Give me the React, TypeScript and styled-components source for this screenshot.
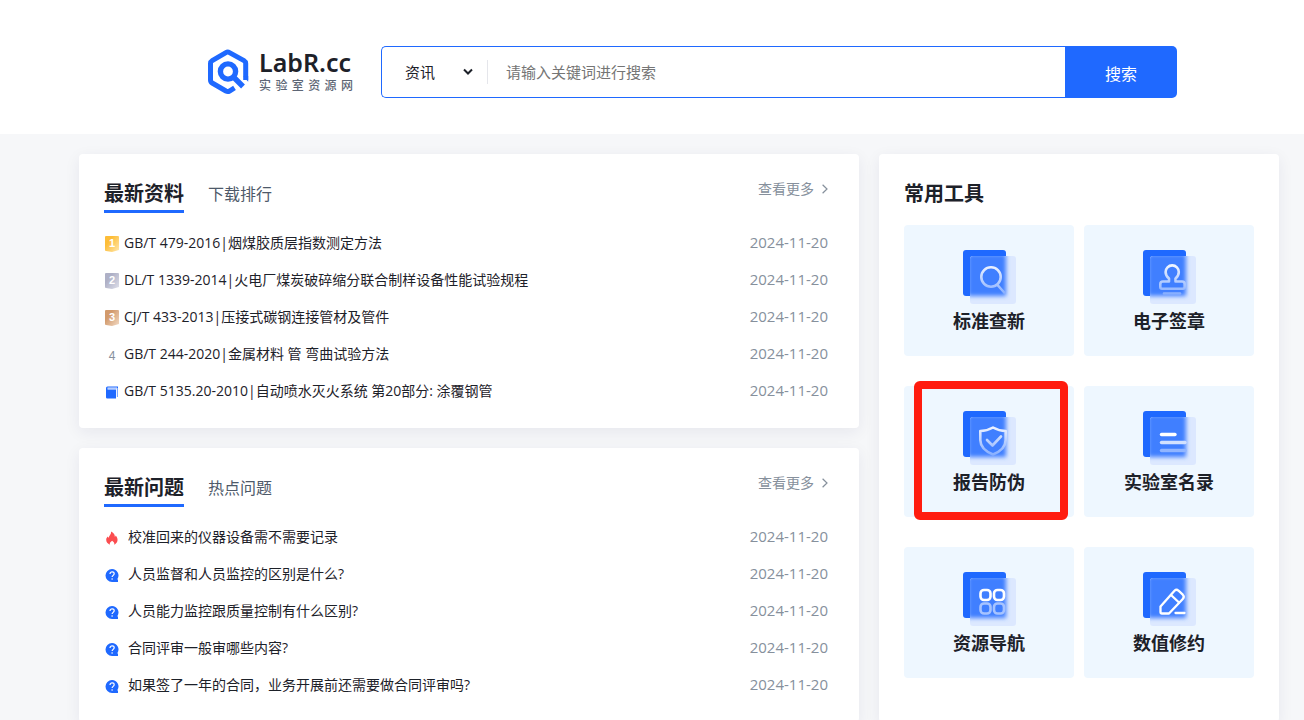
import React from "react";
import styled, { createGlobalStyle, css } from "styled-components";

const GlobalStyle = createGlobalStyle`
  *, *::before, *::after { box-sizing: border-box; }
  body {
    margin: 0;
    background: #f6f7f9;
    color: #1d2129;
    font-family: "Open Sans", "Noto Sans CJK SC", sans-serif;
    font-size: 14px;
  }
  button, input, select { font-family: inherit; }
  a { color: inherit; text-decoration: none; }
  h2, ul, ol { margin: 0; padding: 0; }
  ul, ol { list-style: none; }
  svg { display: block; }
`;

const Header = styled.header`
  display: flex;
  align-items: center;
  gap: 28px;
  padding: 46px 127px 36px 207px;
  background: #fff;
`;

const Brand = styled.a`
  display: flex;
  align-items: center;
  gap: 10px;
`;

const BrandText = styled.span`
  display: flex;
  flex-direction: column;
  gap: 2px;
  width: 94px;
  padding-bottom: 2px;
`;

const BrandName = styled.span`
  font-family: "Noto Sans", sans-serif;
  font-size: 25px;
  font-weight: 600;
  line-height: 28px;
  white-space: nowrap;
`;

const BrandTagline = styled.span`
  font-size: 12px;
  font-weight: 500;
  line-height: 16px;
  color: #5d6675;
  text-align-last: justify;
`;

const SearchForm = styled.form`
  display: flex;
  flex: 1;
  height: 52px;
`;

const SearchField = styled.div`
  display: flex;
  flex: 1;
  align-items: center;
  border: 1px solid #1f69ff;
  border-right: 0;
  border-radius: 5px 0 0 5px;
  background: #fff;
`;

const SelectWrap = styled.div`
  display: flex;
  align-items: center;
  width: 106px;
  height: 24px;
  padding-right: 13px;
  border-right: 1px solid #e5e6eb;
`;

const CategorySelect = styled.select`
  appearance: none;
  flex: 1;
  min-width: 0;
  margin-right: -12px;
  padding: 0 0 0 23px;
  border: 0;
  background: transparent;
  color: #1d2129;
  font-size: 15px;
  line-height: 24px;
`;

const SearchInput = styled.input`
  flex: 1;
  min-width: 0;
  height: 100%;
  padding: 0 18px;
  border: 0;
  outline: 0;
  background: transparent;
  font-size: 15px;
  &::placeholder { color: #757575; }
`;

const SearchButton = styled.button`
  width: 112px;
  padding: 2px 0 0;
  border: 0;
  border-radius: 0 5px 5px 0;
  background: #1f69ff;
  color: #fff;
  font-size: 16px;
`;

const Main = styled.main`
  display: grid;
  grid-template-columns: minmax(0, 1fr) 400px;
  gap: 20px;
  padding: 20px 25px 20px 79px;
`;

const Column = styled.div`
  display: flex;
  flex-direction: column;
  gap: 20px;
`;

const Card = styled.section`
  padding: 24px 25px 19px;
  border-radius: 4px;
  background: #fff;
  box-shadow: 0 4px 16px rgba(29, 33, 80, 0.07);
`;

const ListHead = styled.div`
  display: flex;
  align-items: flex-start;
  height: 46px;
`;

const Tab = styled.button<{ $active?: boolean }>`
  height: 35px;
  margin-right: 24px;
  padding: 0;
  border: 0;
  border-bottom: 3px solid transparent;
  background: none;
  color: #4e5969;
  font-size: 16px;
  line-height: 32px;
  ${(p) =>
    p.$active &&
    css`
      border-bottom-color: #1f69ff;
      color: #1d2129;
      font-size: 20px;
      font-weight: 700;
      line-height: 28px;
    `}
`;

const MoreLink = styled.a`
  display: flex;
  align-items: center;
  gap: 8px;
  margin: 0 6px 0 auto;
  color: #86909c;
  line-height: 22px;
`;

const Row = styled.li<{ $gap: number }>`
  display: flex;
  align-items: center;
  gap: ${(p) => p.$gap}px;
  height: 37px;
  padding: 0 6px 0 1px;
  & > svg { flex: none; margin-top: 2px; }
`;

const RowTitle = styled.a`
  flex: 1;
  min-width: 0;
  overflow: hidden;
  white-space: nowrap;
  text-overflow: ellipsis;
  line-height: 22px;
`;

const RowDate = styled.time`
  padding-bottom: 2px;
  color: #86909c;
  font-size: 15px;
  line-height: 22px;
`;

const ToolsTitle = styled.h2`
  height: 47px;
  font-size: 20px;
  line-height: 32px;
`;

const ToolGrid = styled.div`
  display: grid;
  grid-template-columns: 1fr 1fr;
  gap: 30px 10px;
`;

const Tool = styled.a`
  position: relative;
  display: flex;
  flex-direction: column;
  align-items: center;
  height: 131px;
  padding-top: 25px;
  border-radius: 4px;
  background: #eef7ff;
  font-size: 18px;
  font-weight: 700;
  line-height: 26px;
`;

const ToolLabel = styled.span`
  margin-top: 4px;
`;

const Highlight = styled.span`
  position: absolute;
  inset: -5px 6px -3px 10px;
  border: 8px solid #ff1c0f;
  border-radius: 6px;
`;

function LogoMark() {
  return (
    <svg width="42" height="46" viewBox="0 0 42 46" fill="none" stroke="#1f69ff" aria-hidden="true">
      <path d="M27.5 38.8 22.5 42q-1.7 1-3.6 0L5.2 34Q3.500 33 3.500 31V14.500Q3.500 12.600 5.200 11.600L18.900 3.600q1.800-1 3.600 0L37 11.600Q38.700 12.600 38.700 14.500V31" strokeWidth="5" />
      <path d="M36.200 27.500 41.200 32.800V27Z" fill="#1f69ff" stroke="none" />
      <circle cx="21" cy="22.500" r="7.600" strokeWidth="5.400" />
      <path d="M26 27.500 36 37.500" strokeWidth="5.400" />
    </svg>
  );
}

function Chevron() {
  return (
    <svg width="12" height="8" viewBox="0 0 12 8" fill="none" stroke="#1d2129" strokeWidth="2" pointerEvents="none" aria-hidden="true">
      <path d="m2 1.500 4 4 4-4" />
    </svg>
  );
}

function MoreArrow() {
  return (
    <svg width="6" height="10" viewBox="0 0 6 10" fill="none" stroke="#86909c" strokeWidth="1.200" aria-hidden="true">
      <path d="m.6.8 4.400 4.200L.6 9.200" />
    </svg>
  );
}

const medalColors: Record<number, [string, string]> = {
  1: ["#fdbd38", "#ffe5a6"],
  2: ["#aeb0c6", "#dcdde8"],
  3: ["#d29a6c", "#f0d6bf"],
};

function Medal({ rank }: { rank: number }) {
  const [from, to] = medalColors[rank];
  return (
    <svg width="14" height="16" viewBox="0 0 14 16" aria-hidden="true">
      <defs>
        <linearGradient id={`medal${rank}`} x1="0.300" y1="0.300" x2="1" y2="0.900">
          <stop offset="0" stopColor={from} />
          <stop offset="1" stopColor={to} />
        </linearGradient>
      </defs>
      <path d="M1 0h12q1 0 1 1v13l-7 2-6-1q-1 0-1-1V1q0-1 1-1Z" fill={`url(#medal${rank})`} />
      <text x="7" y="11" textAnchor="middle" fontFamily="Liberation Sans, sans-serif" fontSize="11" fontWeight="700" fill="#fff">{rank}</text>
    </svg>
  );
}

function PlainRank({ rank }: { rank: number }) {
  return (
    <svg width="14" height="16" viewBox="0 0 14 16" aria-hidden="true">
      <text x="7" y="13" textAnchor="middle" fontFamily="Liberation Sans, sans-serif" fontSize="12" fill="#86909c">{rank}</text>
    </svg>
  );
}

function BookIcon() {
  return (
    <svg width="14" height="16" viewBox="0 0 14 16" aria-hidden="true">
      <path d="M1 4q0-1.500 1.500-1.500H13V13h-1V4.500H2.500V5.500H11V14.500H2.200Q1 14.500 1 13.300Z" fill="#1f69ff" />
      <path d="M2.500 4H12v9" fill="none" stroke="#dbe7ff" strokeWidth="1" />
    </svg>
  );
}

function FireIcon() {
  return (
    <svg width="14" height="16" viewBox="0 0 14 16" aria-hidden="true">
      <path d="M6.200 1.500c2.800 1.400 3.700 3.400 3.600 5.200.6-.2.900-.6 1-1.200 1.200 1.700 2 3.200 1.700 5-.3 2-1.700 3.500-3.200 4.200.3-1.600-.4-2.700-2.200-3.900-1.700 1.200-2.600 2.300-2.300 3.900C2.800 13.700 1 12 1.200 9.500c.1-1.300.7-2 1.500-3 .3.700.5 1 1 1.200C3.900 5.500 6.300 4.500 6.200 1.500Z" fill="#fb4d50" />
    </svg>
  );
}

function QuestionIcon() {
  return (
    <svg width="14" height="16" viewBox="0 0 14 16" aria-hidden="true">
      <path d="M7 2a6.500 6.500 0 1 0 0 13h6v-2.200l-.7-.6A6.500 6.500 0 0 0 7 2Z" fill="#1f69ff" />
      <path d="M5 7c0-2.800 4.200-2.600 4.200-.2C9.200 8.300 7.100 8.500 7.100 10.100" fill="none" stroke="#fff" strokeWidth="1.200" />
      <circle cx="7.100" cy="12" r=".8" fill="#fff" />
    </svg>
  );
}

type ToolKind = "search" | "stamp" | "shield" | "list" | "grid" | "pencil";

const glyphs: Record<ToolKind, React.ReactNode> = {
  search: (
    <>
      <circle cx="28" cy="27" r="9.700" />
      <path d="m34.500 35 6.700 7.500" />
    </>
  ),
  stamp: (
    <>
      <path d="M26 31.500H20q-2.700 0-2.700 2.700V37q0 1.700 1.700 1.700H40q1.700 0 1.700-1.700V34.200q0-2.700-2.700-2.700H32.500V28.500Q35.800 25.800 35.800 22a6.600 6.600 0 0 0-13.200 0Q22.600 25.800 26 28.500Z" />
      <path d="M21 43.500H37" />
    </>
  ),
  shield: (
    <>
      <path d="M30 16.500Q36 20 42.700 20V29Q42.500 38.500 30 43.500 17.500 38.500 17.300 29V20Q24 20 30 16.500Z" />
      <path d="m24 29 5.500 5.500 8.500-9" />
    </>
  ),
  list: (
    <g strokeWidth="3.400">
      <path d="M18.500 23.500H32" stroke="#fff" />
      <path d="M18.500 31.500H42" stroke="#d2e1ff" />
      <path d="M18.500 39.500H42" stroke="#91b5ff" />
    </g>
  ),
  grid: (
    <>
      <rect x="17.500" y="18" width="10" height="10" rx="3.500" stroke="#fff" />
      <rect x="31" y="18" width="10" height="10" rx="3.500" stroke="#fff" />
      <rect x="17.500" y="31.500" width="10" height="10" rx="3.500" stroke="#a6c3ff" />
      <rect x="31" y="31.500" width="10" height="10" rx="3.500" stroke="#a6c3ff" />
    </>
  ),
  pencil: (
    <g stroke="#fff" strokeWidth="2.300">
      <path d="M17.500 34.500 31.500 18.700q2-2 4 0l4.300 4q2 2 0 4.200L26 41.500H19q-1.500 0-1.500-1.500Z" />
      <path d="m28 23 8 7.500M32.500 41H41.500" />
    </g>
  ),
};

function ToolIcon({ kind }: { kind: ToolKind }) {
  const id = `tool-${kind}`;
  return (
    <svg width="53" height="54" viewBox="0 0 53 54" fill="none" aria-hidden="true">
      <defs>
        <clipPath id={`${id}-clip`}>
          <rect x="7" y="6" width="46" height="48" rx="3" />
        </clipPath>
        <filter id={`${id}-blur`} x="-20%" y="-20%" width="140%" height="140%">
          <feGaussianBlur stdDeviation="2.200" />
        </filter>
        <linearGradient id={`${id}-ink`} gradientUnits="userSpaceOnUse" x1="0" y1="15" x2="0" y2="46">
          <stop offset="0" stopColor="#f2f6ff" />
          <stop offset="1" stopColor="#7fa9ff" />
        </linearGradient>
      </defs>
      <rect width="43" height="46" rx="3" fill="#1f69ff" />
      <g clipPath={`url(#${id}-clip)`}>
        <rect x="7" y="6" width="46" height="48" fill="#dce8ff" />
        <rect x="5" y="4" width="38" height="42" fill="#3f7fff" filter={`url(#${id}-blur)`} />
      </g>
      <g stroke={`url(#${id}-ink)`} strokeWidth="2.600" strokeLinecap="round" strokeLinejoin="round">
        {glyphs[kind]}
      </g>
    </svg>
  );
}

interface Entry {
  icon: React.ReactNode;
  title: string;
}

const documents: Entry[] = [
  { icon: <Medal rank={1} />, title: "GB/T 479-2016|烟煤胶质层指数测定方法" },
  { icon: <Medal rank={2} />, title: "DL/T 1339-2014|火电厂煤炭破碎缩分联合制样设备性能试验规程" },
  { icon: <Medal rank={3} />, title: "CJ/T 433-2013|压接式碳钢连接管材及管件" },
  { icon: <PlainRank rank={4} />, title: "GB/T 244-2020|金属材料 管 弯曲试验方法" },
  { icon: <BookIcon />, title: "GB/T 5135.20-2010|自动喷水灭火系统 第20部分: 涂覆钢管" },
];

const questions: Entry[] = [
  { icon: <FireIcon />, title: "校准回来的仪器设备需不需要记录" },
  { icon: <QuestionIcon />, title: "人员监督和人员监控的区别是什么?" },
  { icon: <QuestionIcon />, title: "人员能力监控跟质量控制有什么区别?" },
  { icon: <QuestionIcon />, title: "合同评审一般审哪些内容?" },
  { icon: <QuestionIcon />, title: "如果签了一年的合同，业务开展前还需要做合同评审吗?" },
];

const tools: { kind: ToolKind; label: string; highlighted?: boolean }[] = [
  { kind: "search", label: "标准查新" },
  { kind: "stamp", label: "电子签章" },
  { kind: "shield", label: "报告防伪", highlighted: true },
  { kind: "list", label: "实验室名录" },
  { kind: "grid", label: "资源导航" },
  { kind: "pencil", label: "数值修约" },
];

function ListCard({ tabs, entries, gap }: { tabs: [string, string]; entries: Entry[]; gap: number }) {
  return (
    <Card>
      <ListHead>
        <Tab type="button" $active>{tabs[0]}</Tab>
        <Tab type="button">{tabs[1]}</Tab>
        <MoreLink href="#">查看更多<MoreArrow /></MoreLink>
      </ListHead>
      <ul>
        {entries.map((entry) => (
          <Row key={entry.title} $gap={gap}>
            {entry.icon}
            <RowTitle href="#">{entry.title}</RowTitle>
            <RowDate dateTime="2024-11-20">2024-11-20</RowDate>
          </Row>
        ))}
      </ul>
    </Card>
  );
}

export default function App() {
  return (
    <>
      <GlobalStyle />
      <Header>
        <Brand href="#">
          <LogoMark />
          <BrandText>
            <BrandName>LabR.cc</BrandName>
            <BrandTagline>实验室资源网</BrandTagline>
          </BrandText>
        </Brand>
        <SearchForm role="search" onSubmit={(e) => e.preventDefault()}>
          <SearchField>
            <SelectWrap>
              <CategorySelect aria-label="资讯">
                <option>资讯</option>
              </CategorySelect>
              <Chevron />
            </SelectWrap>
            <SearchInput type="text" placeholder="请输入关键词进行搜索" aria-label="请输入关键词进行搜索" />
          </SearchField>
          <SearchButton type="submit">搜索</SearchButton>
        </SearchForm>
      </Header>
      <Main>
        <Column>
          <ListCard tabs={["最新资料", "下载排行"]} entries={documents} gap={5} />
          <ListCard tabs={["最新问题", "热点问题"]} entries={questions} gap={9} />
        </Column>
        <Card>
          <ToolsTitle>常用工具</ToolsTitle>
          <ToolGrid>
            {tools.map((tool) => (
              <Tool key={tool.kind} href="#">
                <ToolIcon kind={tool.kind} />
                <ToolLabel>{tool.label}</ToolLabel>
                {tool.highlighted && <Highlight />}
              </Tool>
            ))}
          </ToolGrid>
        </Card>
      </Main>
    </>
  );
}
